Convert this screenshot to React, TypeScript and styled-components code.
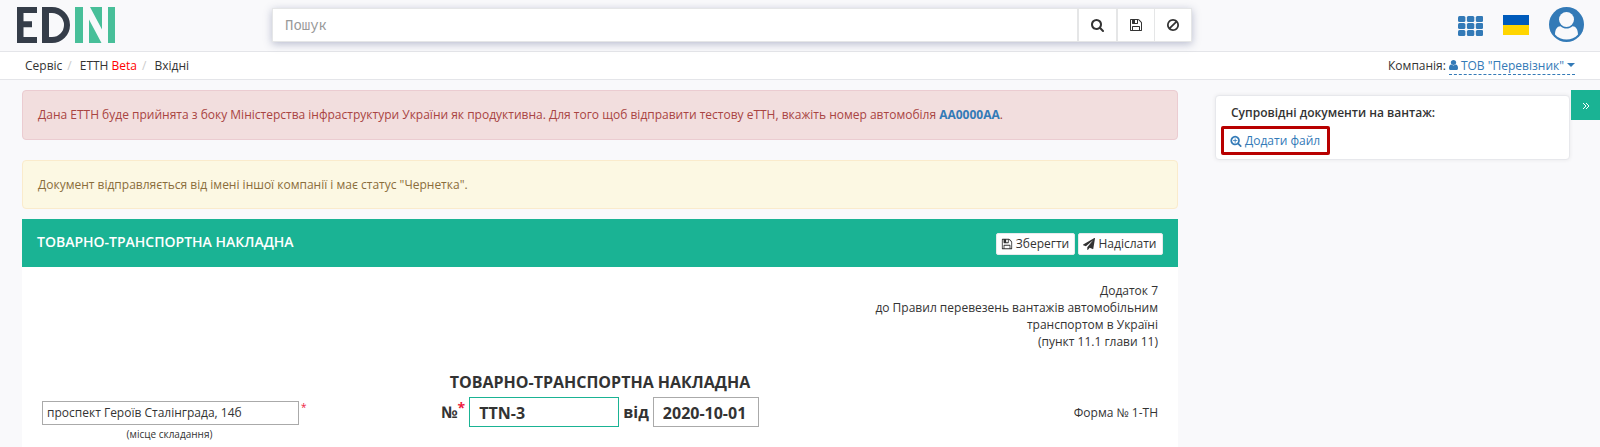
import React from "react";
import styled, { createGlobalStyle } from "styled-components";

const colors = {
  green: "#1ab394",
  blue: "#337ab7",
  text: "#333333",
  line: "#e4e5e9",
  page: "#f9f9fb",
};

const GlobalStyle = createGlobalStyle`
  *, *::before, *::after { box-sizing: border-box; }
  html, body { margin: 0; background: ${colors.page}; }
  body {
    font-family: "Open Sans", "Noto Sans", sans-serif;
    font-size: 12px;
    line-height: 17px;
    color: ${colors.text};
    overflow: hidden;
  }
  button, input { font: inherit; color: inherit; }
  a { color: ${colors.blue}; text-decoration: none; }
`;

const icons = {
  search:
    "M1152 832q0-185-131.5-316.5t-316.5-131.5-316.5 131.5-131.5 316.5 131.5 316.5 316.5 131.5 316.5-131.5 131.5-316.5zm512 832q0 52-38 90t-90 38q-54 0-90-38l-343-342q-179 124-399 124-143 0-273.5-55.5t-225-150-150-225-55.5-273.5 55.5-273.5 150-225 225-150 273.5-55.5 273.5 55.5 225 150 150 225 55.5 273.5q0 220-124 399l343 343q37 37 37 90z",
  save: "M512 1536h768v-384h-768v384zm896 0h128v-896q0-14-10-38.5t-20-34.5l-281-281q-10-10-34-20t-39-10v416q0 40-28 68t-68 28h-576q-40 0-68-28t-28-68v-416h-128v1280h128v-416q0-40 28-68t68-28h832q40 0 68 28t28 68v416zm-384-928v-320q0-13-9.5-22.5t-22.5-9.5h-192q-13 0-22.5 9.5t-9.5 22.5v320q0 13 9.5 22.5t22.5 9.5h192q13 0 22.5-9.5t9.5-22.5zm640 32v928q0 40-28 68t-68 28h-1344q-40 0-68-28t-28-68v-1344q0-40 28-68t68-28h928q40 0 88 20t76 48l280 280q28 28 48 76t20 88z",
  ban: "M1440 893q0-161-87-295l-754 753q137 89 297 89 111 0 211.5-43.5t173.5-116.5 116-174.5 43-212.5zm-999 299l755-754q-135-91-300-91-148 0-273 73t-198 199-73 274q0 162 89 299zm1223-299q0 157-61 300t-163.5 246-245 164-298.5 61-298.5-61-245-164-163.5-246-61-300 61-299.5 163.5-245.5 245-164 298.5-61 298.5 61 245 164 163.5 245.5 61 299.5z",
  plane:
    "M1764 11q33 24 27 64l-256 1536q-5 29-32 45-14 8-31 8-11 0-24-5l-453-185-242 295q-18 23-49 23-13 0-22-4-19-7-30.5-23.5t-11.5-36.5v-349l864-1059-1069 925-395-162q-37-14-40-55-2-40 32-59l1664-960q15-9 32-9 20 0 36 11z",
  zoomIn:
    "M1088 800v64q0 13-9.5 22.5t-22.5 9.5h-224v224q0 13-9.5 22.5t-22.5 9.5h-64q-13 0-22.5-9.5t-9.5-22.5v-224h-224q-13 0-22.5-9.5t-9.5-22.5v-64q0-13 9.5-22.5t22.5-9.5h224v-224q0-13 9.5-22.5t22.5-9.5h64q13 0 22.5 9.5t9.5 22.5v224h224q13 0 22.5 9.5t9.5 22.5zm128 32q0-185-131.5-316.5t-316.5-131.5-316.5 131.5-131.5 316.5 131.5 316.5 316.5 131.5 316.5-131.5 131.5-316.5zm512 832q0 53-37.5 90.5t-90.5 37.5q-54 0-90-38l-343-342q-179 124-399 124-143 0-273.5-55.5t-225-150-150-225-55.5-273.5 55.5-273.5 150-225 225-150 273.5-55.5 273.5 55.5 225 150 150 225 55.5 273.5q0 220-124 399l343 343q37 37 37 90z",
  user: "M1536 1399q0 109-62.5 187t-150.5 78h-854q-88 0-150.5-78t-62.5-187q0-85 8.5-160.5t31.5-152 58.5-131 94-89 134.5-34.5q131 128 313 128t313-128q76 0 134.500 34.5t94 89 58.5 131 31.5 152 8.5 160.5zm-256-887q0 159-112.5 271.5t-271.5 112.5-271.5-112.5-112.5-271.5 112.5-271.5 271.5-112.5 271.5 112.5 112.5 271.5z",
};

const IconSvg = styled.svg`
  display: block;
  flex: none;
  fill: currentColor;
`;

function Icon({ name, size }: { name: keyof typeof icons; size: number }) {
  return (
    <IconSvg width={size} height={size} viewBox="0 0 1792 1792">
      <path d={icons[name]} />
    </IconSvg>
  );
}

const Page = styled.div`
  height: 447px;
  overflow: hidden;
`;

const Header = styled.header`
  display: flex;
  align-items: flex-start;
  height: 52px;
  padding: 7px 16px 0 17px;
  border-bottom: 1px solid ${colors.line};
`;

const Logo = styled.svg`
  display: block;
  flex: none;
`;

const SearchBar = styled.form`
  display: flex;
  width: 920px;
  height: 34px;
  margin: 1px 0 0 157px;
  background: #fff;
  border: 1px solid #e5e6e7;
  box-shadow: 0 2px 8px rgba(80, 90, 135, 0.38);
`;

const SearchInput = styled.input`
  flex: 1;
  min-width: 0;
  padding: 2px 12px 0;
  border: 0;
  outline: 0;
  background: transparent;
  font-family: "Liberation Mono", monospace;
  font-size: 14px;
  &::placeholder { color: #999; opacity: 1; }
`;

const SearchButton = styled.button<{ $width: number; $line?: number }>`
  display: flex;
  align-items: center;
  justify-content: center;
  width: ${(p) => p.$width}px;
  padding: 0;
  background: transparent;
  border: 0;
  border-left: ${(p) => p.$line ?? 1}px solid #e5e6e7;
`;

const HeaderTools = styled.div`
  display: flex;
  align-items: flex-start;
  margin-left: auto;
`;

const AppsGrid = styled.svg`
  width: 25px;
  height: 20px;
  margin: 9px 20px 0 0;
  fill: ${colors.blue};
`;

const Flag = styled.div`
  width: 26px;
  height: 20px;
  margin: 8px 20px 0 0;
  background: linear-gradient(#005bbb 50%, #ffd500 50%);
`;

const Crumbs = styled.nav`
  display: flex;
  align-items: center;
  height: 28px;
  padding: 0 25px;
  background: #fff;
  border-bottom: 1px solid ${colors.line};
`;

const Crumb = styled.span`
  & + &::before {
    content: "/";
    padding: 0 8px 0 5px;
    color: #ccc;
  }
`;

const Beta = styled.span`
  color: #f00;
`;

const Company = styled.div`
  display: flex;
  gap: 3px;
  margin-left: auto;
`;

const CompanyLink = styled.a`
  display: flex;
  align-items: center;
  gap: 2px;
  height: 18px;
  border-bottom: 1px dashed ${colors.blue};
`;

const UserIcon = styled.svg`
  width: 9px;
  height: 10px;
  margin-right: 1px;
  fill: currentColor;
`;

const Caret = styled.span`
  margin-left: 1px;
  border: 4px solid transparent;
  border-top: 4px solid ${colors.blue};
  border-bottom: 0;
`;

const Body = styled.main`
  display: flex;
  align-items: flex-start;
  padding: 10px 0 0 22px;
`;

const Content = styled.section`
  flex: none;
  width: 1156px;
`;

const Alert = styled.div<{ $tone: "danger" | "warning" }>`
  display: flex;
  align-items: center;
  height: ${(p) => (p.$tone === "danger" ? 50 : 49)}px;
  margin-bottom: ${(p) => (p.$tone === "danger" ? 20 : 10)}px;
  padding: 0 15px ${(p) => (p.$tone === "danger" ? 1 : 0)}px;
  white-space: pre;
  border: 1px solid ${(p) => (p.$tone === "danger" ? "#ebccd1" : "#faebcc")};
  border-radius: 4px;
  color: ${(p) => (p.$tone === "danger" ? "#a94442" : "#8a6d3b")};
  background: ${(p) => (p.$tone === "danger" ? "#f2dede" : "#fcf8e3")};
`;

const PanelHead = styled.div`
  display: flex;
  align-items: center;
  height: 48px;
  padding: 0 15px;
  background: ${colors.green};
`;

const PanelTitle = styled.h1`
  margin: 0 auto 3px 0;
  font-size: 14px;
  font-weight: 600;
  line-height: 20px;
  color: #fff;
`;

const ActionButton = styled.button<{ $width: number }>`
  display: flex;
  align-items: center;
  justify-content: center;
  gap: 3px;
  width: ${(p) => p.$width}px;
  height: 22px;
  margin: 1px 0 0 3px;
  padding: 0 1px 0 0;
  border: 1px solid #e7eaec;
  border-radius: 2px;
  background: #fff;
`;

const PanelBody = styled.div`
  height: 190px;
  padding: 15px 20px 0;
  background: #fff;
`;

const Appendix = styled.p`
  margin: 0;
  text-align: right;
`;

const FormRow = styled.div`
  display: grid;
  grid-template-columns: 372px 1fr 372px;
  margin-top: 20px;
`;

const PlaceField = styled.div`
  display: flex;
  align-items: flex-start;
  gap: 2px;
  margin-top: 31px;
`;

const Star = styled.span<{ $size: number }>`
  font-size: ${(p) => p.$size}px;
  line-height: 13px;
  color: #ed1c3f;
`;

const PlaceInput = styled.input`
  width: 257px;
  height: 24px;
  padding: 0 4px 1px;
  border: 1px solid #aaa;
  border-radius: 0;
`;

const PlaceHint = styled.div`
  width: 255px;
  margin-top: 2px;
  font-size: 10px;
  line-height: 14px;
  text-align: center;
`;

const DocNumber = styled.div`
  display: flex;
  flex-direction: column;
  align-items: center;
  font-size: 16px;
  font-weight: 700;
  line-height: 24px;
`;

const DocFields = styled.div`
  display: flex;
  align-items: center;
  margin: 3px 0 0 4px;
`;

const DocInput = styled.input<{ $width: number; $active?: boolean }>`
  width: ${(p) => p.$width}px;
  height: 30px;
  margin: 0 4px;
  padding: 2px 10px 0 9px;
  outline: 0;
  border: 1px solid ${(p) => (p.$active ? colors.green : "#aaa")};
  border-radius: 0;
`;

const NumberStar = styled(Star)`
  align-self: flex-start;
  margin-top: 4px;
  font-weight: 700;
`;

const FormCode = styled.div`
  margin-top: 34px;
  text-align: right;
`;

const SideCard = styled.aside`
  flex: none;
  width: 355px;
  height: 65px;
  margin: 5px 1px 0 37px;
  padding: 8px 15px 0;
  background: #fff;
  border: 1px solid #e7e8ec;
  border-radius: 4px;
  box-shadow: 0 0 4px rgba(0, 0, 0, 0.07);
`;

const SideTitle = styled.div`
  font-weight: 600;
`;

const AddFile = styled.a`
  display: flex;
  align-items: center;
  gap: 3px;
  width: 109px;
  height: 29px;
  margin: 5px 0 0 -10px;
  padding: 0 0 0 6px;
  border: 3px solid #b80000;
  border-radius: 2px;
  white-space: nowrap;
`;

const SideToggle = styled.button`
  display: flex;
  align-items: center;
  justify-content: center;
  flex: 1;
  height: 30px;
  padding: 2px 0 0;
  border: 0;
  background: ${colors.green};
`;

export default function App() {
  return (
    <Page>
      <GlobalStyle />
      <Header>
        <Logo width="98" height="36" viewBox="0 0 98 36">
          <path fill="#353d49" d="M0 0h20v6H6.500v8.200H15v6H6.500V30H20v6H0z" />
          <path
            fill="#353d49"
            fillRule="evenodd"
            d="M25 0h10a18 18 0 0 1 0 36H25zM32 6v24h3a12 12 0 0 0 0-24z"
          />
          <path fill="#48bf99" d="M58 0h8v36h-8zM91 0h7v36h-7zM73 0h12v22.500zM72 12.500 84.500 36H72z" />
        </Logo>
        <SearchBar>
          <SearchInput placeholder="Пошук" />
          <SearchButton type="button" $width={39} $line={2}>
            <Icon name="search" size={14} />
          </SearchButton>
          <SearchButton type="button" $width={38} $line={2}>
            <Icon name="save" size={14} />
          </SearchButton>
          <SearchButton type="button" $width={37}>
            <Icon name="ban" size={14} />
          </SearchButton>
        </SearchBar>
        <HeaderTools>
          <AppsGrid viewBox="0 0 25 20">
            {[0, 7, 14].map((y) =>
              [0, 8.9, 17.8].map((x) => (
                <rect key={`${x}-${y}`} x={x} y={y} width="7.400" height="5.900" rx="1.500" />
              ))
            )}
          </AppsGrid>
          <Flag />
          <IconSvg width="35" height="35" viewBox="0 0 35 35">
            <circle cx="17.500" cy="17.500" r="17.500" fill={colors.blue} />
            <circle cx="17.500" cy="12.500" r="7.500" fill="#f9f9fb" />
            <path
              fill="#f9f9fb"
              d="M6 27.500C6 22 8.500 19 11.500 19.200c3.500 3.200 8.500 3.200 12 0 3-.2 5.500 2.800 5.500 8.300-5.500 6.700-17.500 6.700-23 0z"
            />
          </IconSvg>
        </HeaderTools>
      </Header>
      <Crumbs>
        <Crumb>Сервіс</Crumb>
        <Crumb>
          ЕТТН <Beta>Beta</Beta>
        </Crumb>
        <Crumb>Вхідні</Crumb>
        <Company>
          Компанія:
          <CompanyLink>
            <UserIcon viewBox="256 128 1280 1536" preserveAspectRatio="none">
              <path d={icons.user} />
            </UserIcon>
            ТОВ "Перевізник"
            <Caret />
          </CompanyLink>
        </Company>
      </Crumbs>
      <Body>
        <Content>
          <Alert $tone="danger">
            Дана ЕТТН буде прийнята з боку Міністерства інфраструктури України як продуктивна. Для того щоб
            {" відправити тестову еТТН, вкажіть номер автомобіля "}
            <a>
              <b>АА0000АА</b>
            </a>
            .
          </Alert>
          <Alert $tone="warning">
            Документ відправляється від імені іншої компанії і має статус "Чернетка".
          </Alert>
          <PanelHead>
            <PanelTitle>ТОВАРНО-ТРАНСПОРТНА НАКЛАДНА</PanelTitle>
            <ActionButton $width={79}>
              <Icon name="save" size={12} />
              Зберегти
            </ActionButton>
            <ActionButton $width={85}>
              <Icon name="plane" size={12} />
              Надіслати
            </ActionButton>
          </PanelHead>
          <PanelBody>
            <Appendix>
              Додаток 7<br />
              до Правил перевезень вантажів автомобільним
              <br />
              транспортом в Україні
              <br />
              (пункт 11.1 глави 11)
            </Appendix>
            <FormRow>
              <div>
                <PlaceField>
                  <PlaceInput defaultValue="проспект Героїв Сталінграда, 14б" />
                  <Star $size={10}>*</Star>
                </PlaceField>
                <PlaceHint>(місце складання)</PlaceHint>
              </div>
              <DocNumber>
                ТОВАРНО-ТРАНСПОРТНА НАКЛАДНА
                <DocFields>
                  №<NumberStar $size={14}>*</NumberStar>
                  <DocInput $width={150} $active defaultValue="TTN-3" />
                  від
                  <DocInput $width={106} defaultValue="2020-10-01" />
                </DocFields>
              </DocNumber>
              <FormCode>Форма № 1-ТН</FormCode>
            </FormRow>
          </PanelBody>
        </Content>
        <SideCard>
          <SideTitle>Супровідні документи на вантаж:</SideTitle>
          <AddFile>
            <Icon name="zoomIn" size={12} />
            Додати файл
          </AddFile>
        </SideCard>
        <SideToggle>
          <svg width="8" height="8" viewBox="0 0 8 8" fill="none" stroke="#fff" strokeWidth="1">
            <path d="M1 1l3 3-3 3M4 1l3 3-3 3" />
          </svg>
        </SideToggle>
      </Body>
    </Page>
  );
}
